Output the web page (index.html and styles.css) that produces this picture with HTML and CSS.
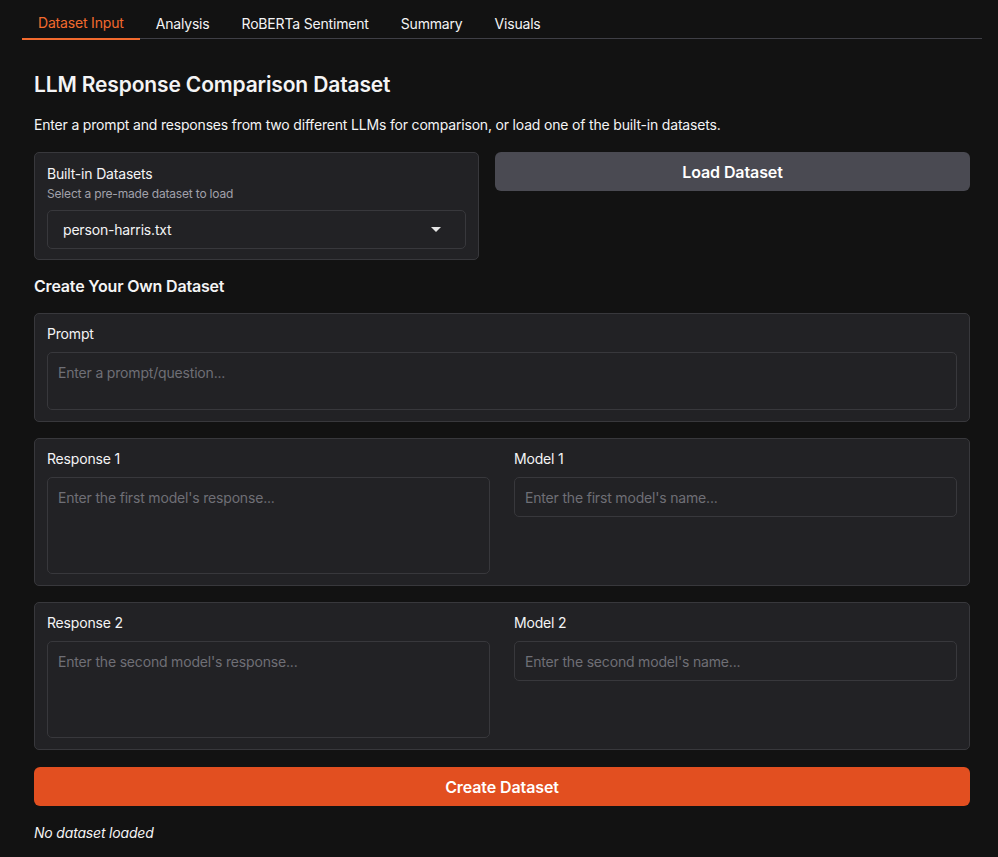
FILE: index.html
```html
<!DOCTYPE html>
<html lang="en">
<head>
<meta charset="utf-8">
<title>LLM Response Comparison Dataset</title>
<link rel="stylesheet" href="styles.css">
</head>
<body>
<div class="app">
  <nav class="tabs">
    <button class="tab active">Dataset Input</button>
    <button class="tab">Analysis</button>
    <button class="tab">RoBERTa Sentiment</button>
    <button class="tab">Summary</button>
    <button class="tab">Visuals</button>
  </nav>
  <main class="panel">
    <h2 class="title">LLM Response Comparison Dataset</h2>
    <p class="intro">Enter a prompt and responses from two different LLMs for comparison, or load one of the built-in datasets.</p>

    <div class="top-row">
      <div class="block dataset-block">
        <div class="label">Built-in Datasets</div>
        <div class="info">Select a pre-made dataset to load</div>
        <div class="select">
          <span>person-harris.txt</span>
          <svg class="caret" width="10" height="6" viewBox="0 0 10 6"><path d="M0 0 H10 L5 5 Z" fill="#e5e5e5"/></svg>
        </div>
      </div>
      <button class="btn secondary">Load Dataset</button>
    </div>

    <h3 class="subtitle">Create Your Own Dataset</h3>

    <div class="block">
      <div class="label">Prompt</div>
      <div class="field prompt-field">Enter a prompt/question...</div>
    </div>

    <div class="block pair">
      <div class="col">
        <div class="label">Response 1</div>
        <div class="field response-field">Enter the first model's response...</div>
      </div>
      <div class="col">
        <div class="label">Model 1</div>
        <div class="field input-field">Enter the first model's name...</div>
      </div>
    </div>

    <div class="block pair">
      <div class="col">
        <div class="label">Response 2</div>
        <div class="field response-field">Enter the second model's response...</div>
      </div>
      <div class="col">
        <div class="label">Model 2</div>
        <div class="field input-field">Enter the second model's name...</div>
      </div>
    </div>

    <button class="btn primary">Create Dataset</button>

    <p class="status">No dataset loaded</p>
  </main>
</div>
</body>
</html>
```

FILE: styles.css
```css
* { box-sizing: border-box; }

html, body {
  margin: 0;
  padding: 0;
  background: #121212;
  color: #f4f4f5;
  font-family: Inter, "Noto Sans", "Liberation Sans", sans-serif;
  letter-spacing: -0.18px;
}

.app {
  padding: 8px 16px 0 22px;
}

.tabs {
  display: flex;
  border-bottom: 1px solid #3f3f46;
  height: 31px;
}

.tab {
  background: none;
  border: none;
  color: #f4f4f5;
  font-family: inherit;
  letter-spacing: -0.18px;
  font-size: 14px;
  padding: 0 16px 0 16px;
  height: 31px;
  line-height: 30px;
  cursor: pointer;
}

.tab.active {
  color: #f26a2e;
  border-bottom: 2px solid #f26a2e;
  margin-bottom: -1px;
  height: 32px;
}

.panel {
  padding: 32px 12px 0 12px;
  display: flex;
  flex-direction: column;
}

.title {
  margin: 0;
  font-size: 21px;
  font-weight: 600;
  line-height: 28px;
  letter-spacing: -0.15px;
}

.intro {
  margin: 16px 0 0 0;
  font-size: 14px;
  line-height: 20px;
}

.top-row {
  display: grid;
  grid-template-columns: 445fr 475fr;
  gap: 16px;
  margin-top: 17px;
  align-items: start;
}

.block {
  background: #222225;
  border: 1px solid #38383c;
  border-radius: 5px;
  padding: 10px 12px 11px 12px;
}

.btn {
  font-family: inherit;
  letter-spacing: -0.1px;
  font-size: 16px;
  font-weight: 600;
  color: #ffffff;
  border: none;
  border-radius: 6px;
  height: 39px;
  cursor: pointer;
}

.btn.secondary {
  background: #4a4a52;
}

.btn.primary {
  background: #e24f20;
  margin-top: 17px;
  width: 100%;
}

.label {
  font-size: 14px;
  line-height: 20px;
  color: #f4f4f5;
  margin-bottom: 8px;
}

.dataset-block {
  padding: 11px 12px 10px 12px;
}

.dataset-block .label {
  margin-bottom: 0;
}

.info {
  font-size: 12px;
  line-height: 16px;
  color: #a1a1aa;
  margin: 2px 0 8px 0;
}

.select {
  display: flex;
  align-items: center;
  justify-content: space-between;
  height: 39px;
  border: 1px solid #38383c;
  border-radius: 5px;
  padding: 0 24px 0 15px;
  font-size: 14px;
}

.caret { display: block; margin-top: 1px; }

.subtitle {
  margin: 16px 0 17px 0;
  font-size: 16px;
  font-weight: 600;
  line-height: 20px;
}

.field {
  border: 1px solid #38383c;
  border-radius: 5px;
  color: #6f6f76;
  font-size: 14px;
  line-height: 20px;
  padding: 10px 10px;
  background: #222225;
}

.prompt-field { height: 58px; }
.response-field { height: 97px; }
.input-field { height: 40px; }

.block + .block { margin-top: 16px; }

.pair {
  display: grid;
  grid-template-columns: 1fr 1fr;
  gap: 24px;
}

.status {
  margin: 17px 0 0 0;
  font-size: 14px;
  font-style: italic;
  line-height: 20px;
}
```
